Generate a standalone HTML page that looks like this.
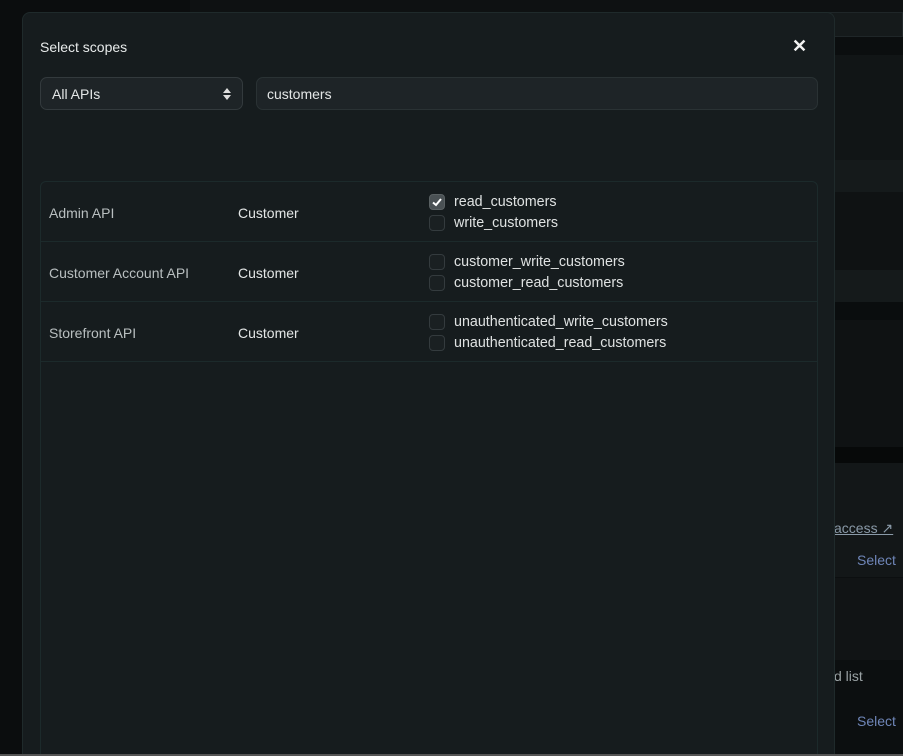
<!DOCTYPE html>
<html style="width:903px;height:756px;overflow:hidden"><head><style>
*{margin:0;padding:0;box-sizing:border-box}
body{width:903px;height:756px;background:#0c0f10;position:relative;overflow:hidden;font-family:"Liberation Sans",sans-serif;color:#e3e6e6}
.b{position:absolute;left:190px;right:0}
.modal{position:absolute;left:22px;top:12px;width:813px;height:744px;background:#161c1e;border:1px solid #1f2a2b;border-bottom:none;border-radius:8px 8px 0 0;overflow:hidden}
.t{position:absolute;font-size:14px}
.sel{position:absolute;left:17px;top:64px;width:203px;height:33px;background:#1e2427;border:1px solid #333a3d;border-radius:7px}
.inp{position:absolute;left:233px;top:64px;width:562px;height:33px;background:#1e2427;border:1px solid #2a3234;border-radius:7px}
.tbl{position:absolute;left:17px;top:168px;width:778px;height:600px;border:1px solid #1c2a2b;border-radius:6px}
.row{position:absolute;left:0;right:0;height:60px;border-bottom:1px solid #1c2a2b}
.cb{position:absolute;left:388px;width:16px;height:16px;border:1px solid #343b3e;border-radius:4px;background:#1a2022}
.lbl{position:absolute;left:413px;font-size:14.3px;color:#dfe2e2}
</style></head><body>
<div style="position:absolute;left:0;top:0;width:190px;height:756px;background:#0b0d0e"></div>
<div class="b" style="top:0;height:12px;background:#0e1112"></div>
<div class="b" style="top:12px;height:25px;background:#151a1b;left:210px;border:1px solid #1f2628"></div>
<div class="b" style="top:37px;height:18px;background:#0b0e0f"></div>
<div class="b" style="top:55px;height:105px;background:#111516"></div>
<div class="b" style="top:160px;height:32px;background:#151a1b"></div>
<div class="b" style="top:192px;height:78px;background:#0f1213"></div>
<div class="b" style="top:270px;height:32px;background:#151a1b"></div>
<div class="b" style="top:302px;height:18px;background:#0a0d0e"></div>
<div class="b" style="top:320px;height:127px;background:#0f1213"></div>
<div class="b" style="top:447px;height:16px;background:#070909"></div>
<div class="b" style="top:463px;height:114px;background:#131718"></div>
<div class="b" style="top:578px;height:82px;background:#111415"></div>
<div class="b" style="top:660px;height:96px;background:#0c0f10"></div>
<div class="t" style="left:834px;top:520px;color:#8a9aa8;text-decoration:underline">access ↗</div>
<div class="t" style="left:857px;top:552px;color:#6f86b8">Select</div>
<div class="t" style="left:834px;top:668px;color:#9aa2a4">d list</div>
<div class="t" style="left:857px;top:713px;color:#6f86b8">Select</div>
<div class="modal">
<div class="t" style="left:17px;top:26px;color:#e8ebeb">Select scopes</div>
<div class="t" style="left:769px;top:23px;font-size:18px;font-weight:bold;color:#f2f2f2">✕</div>
<div class="sel"><span class="t" style="left:11px;top:8px">All APIs</span>
<svg style="position:absolute;left:181px;top:8px" width="10" height="16" viewBox="0 0 10 16"><path d="M1 7 5 2 9 7Z M1 9 5 14 9 9Z" fill="#ddd"/></svg></div>
<div class="inp"><span class="t" style="left:10px;top:8px">customers</span></div>
<div class="tbl">
<div class="row" style="top:0"><span class="t" style="left:8px;top:23px;color:#b9bfc0">Admin API</span><span class="t" style="left:197px;top:23px">Customer</span>
<div class="cb" style="top:12px;background:#4a5154;border-color:#5a6163"><svg width="14" height="14" viewBox="0 0 14 14" style="position:absolute;left:0;top:0"><path d="M3 7.5 6 10 11 4" stroke="#fff" stroke-width="2" fill="none"/></svg></div><span class="lbl" style="top:12px">read_customers</span>
<div class="cb" style="top:33px"></div><span class="lbl" style="top:33px">write_customers</span></div>
<div class="row" style="top:60px"><span class="t" style="left:8px;top:23px;color:#b9bfc0">Customer Account API</span><span class="t" style="left:197px;top:23px">Customer</span>
<div class="cb" style="top:12px"></div><span class="lbl" style="top:12px">customer_write_customers</span>
<div class="cb" style="top:33px"></div><span class="lbl" style="top:33px">customer_read_customers</span></div>
<div class="row" style="top:120px"><span class="t" style="left:8px;top:23px;color:#b9bfc0">Storefront API</span><span class="t" style="left:197px;top:23px">Customer</span>
<div class="cb" style="top:12px"></div><span class="lbl" style="top:12px">unauthenticated_write_customers</span>
<div class="cb" style="top:33px"></div><span class="lbl" style="top:33px">unauthenticated_read_customers</span></div>
</div>
</div>
<div style="position:absolute;left:0;top:754px;width:903px;height:2px;background:#555"></div>
</body></html>
